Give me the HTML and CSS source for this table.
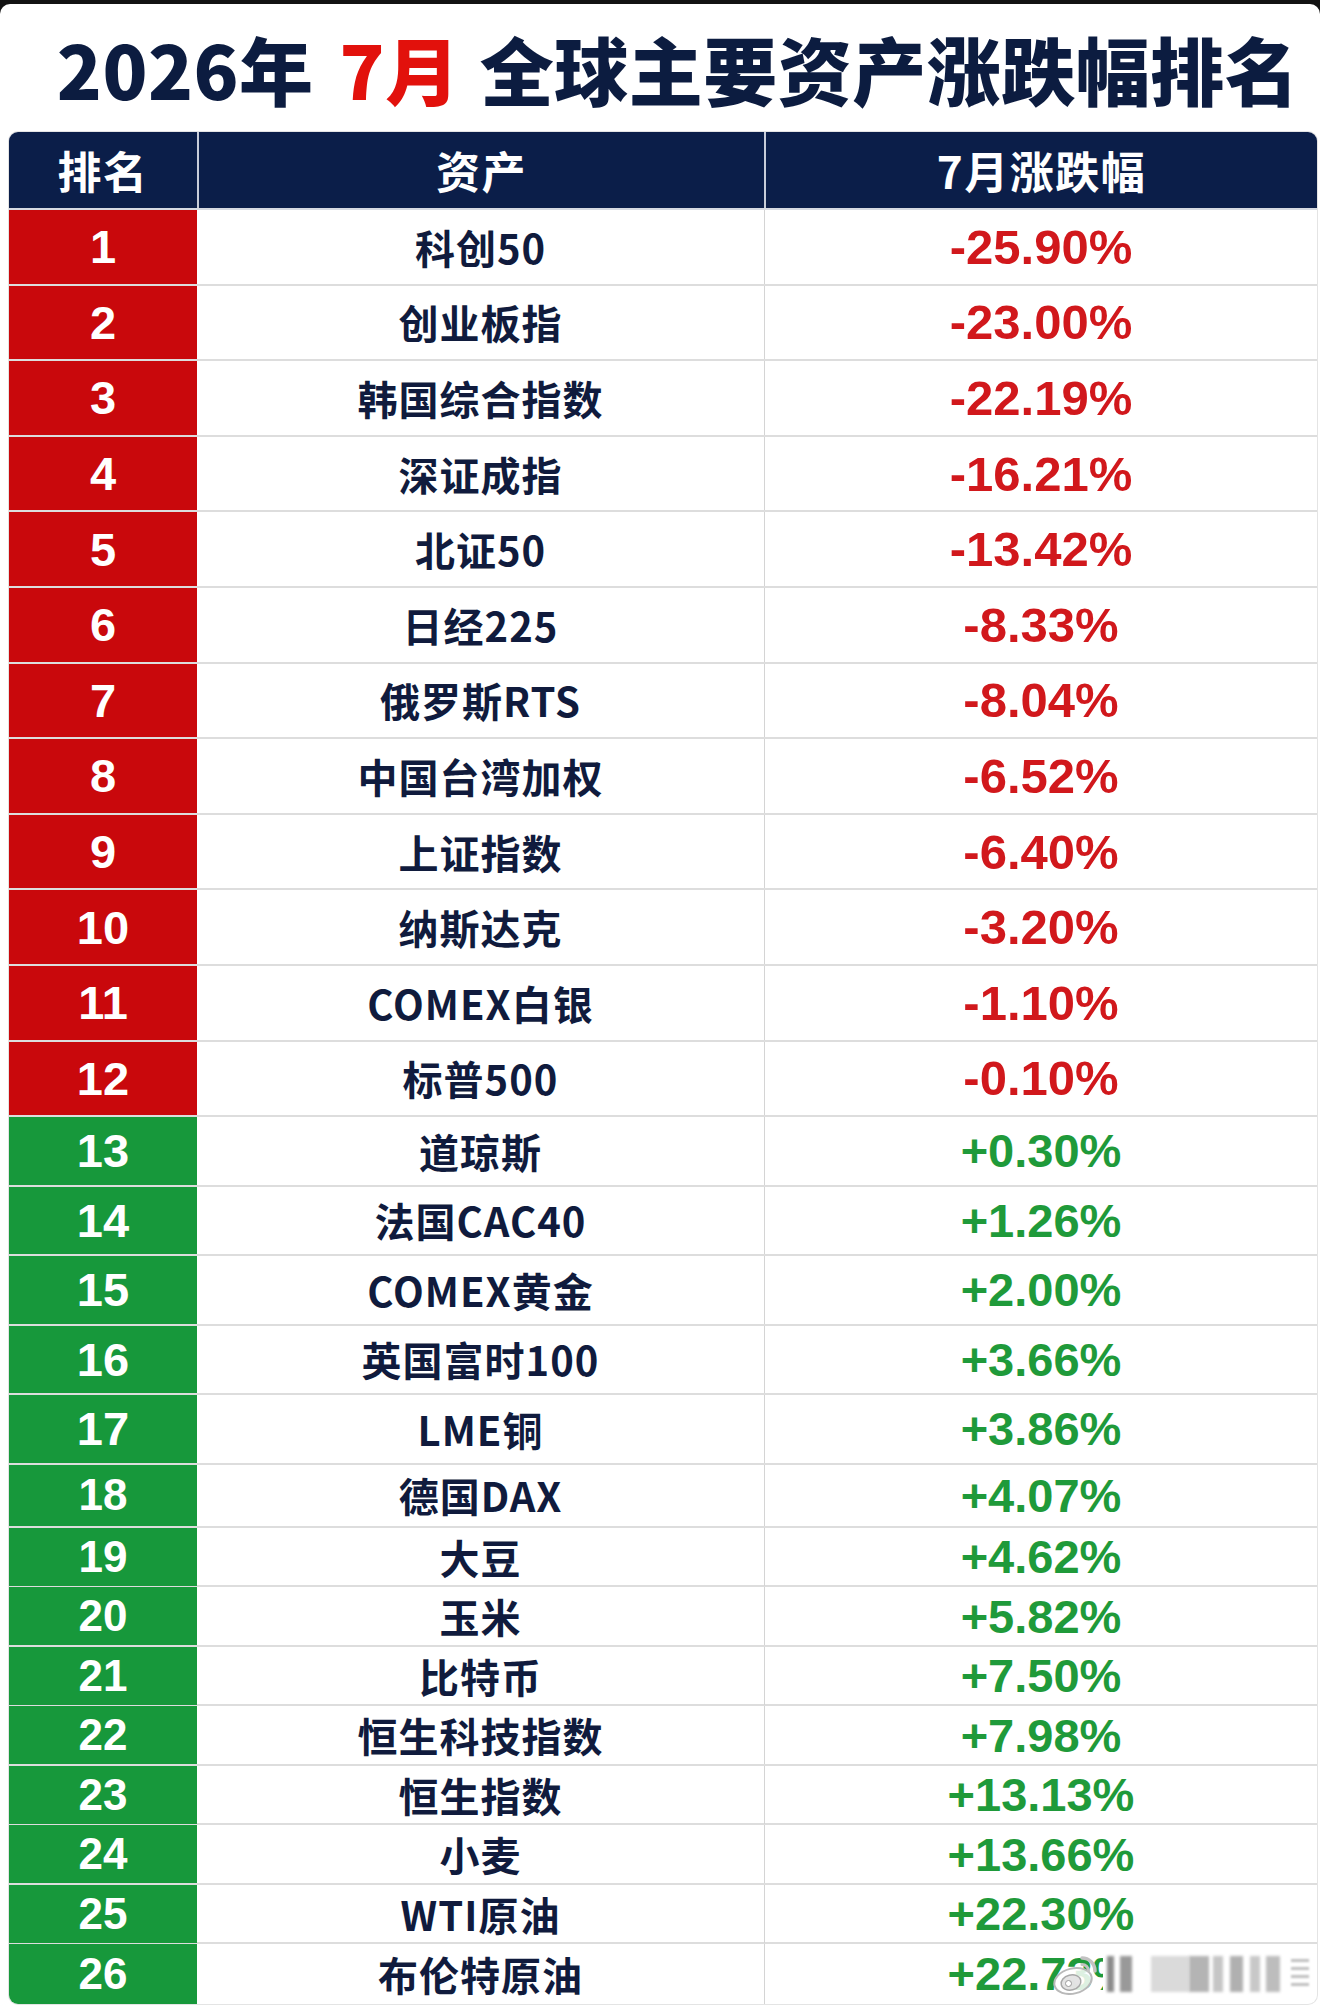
FILE: index.html
```html
<!DOCTYPE html>
<html lang="zh-CN">
<head>
<meta charset="utf-8">
<title>2026年7月全球主要资产涨跌幅排名</title>
<link rel="stylesheet" href="styles.css">
</head>
<body>
<div class="page">
  <h1 class="title"><span>2026年</span><span class="sp"></span><span class="hl">7月</span><span class="sp2"></span><span>全球主要资产涨跌幅排名</span></h1>
  <div class="table">
    <div class="row head"><div class="c rank">排名</div><div class="c asset">资产</div><div class="c chg">7月涨跌幅</div></div>

    <div class="row down tall"><div class="c rank">1</div><div class="c asset">科创50</div><div class="c chg">-25.90%</div></div>
    <div class="row down tall"><div class="c rank">2</div><div class="c asset">创业板指</div><div class="c chg">-23.00%</div></div>
    <div class="row down tall"><div class="c rank">3</div><div class="c asset">韩国综合指数</div><div class="c chg">-22.19%</div></div>
    <div class="row down tall"><div class="c rank">4</div><div class="c asset">深证成指</div><div class="c chg">-16.21%</div></div>
    <div class="row down tall"><div class="c rank">5</div><div class="c asset">北证50</div><div class="c chg">-13.42%</div></div>
    <div class="row down tall"><div class="c rank">6</div><div class="c asset">日经225</div><div class="c chg">-8.33%</div></div>
    <div class="row down tall"><div class="c rank">7</div><div class="c asset">俄罗斯RTS</div><div class="c chg">-8.04%</div></div>
    <div class="row down tall"><div class="c rank">8</div><div class="c asset">中国台湾加权</div><div class="c chg">-6.52%</div></div>
    <div class="row down tall"><div class="c rank">9</div><div class="c asset">上证指数</div><div class="c chg">-6.40%</div></div>
    <div class="row down tall"><div class="c rank">10</div><div class="c asset">纳斯达克</div><div class="c chg">-3.20%</div></div>
    <div class="row down tall"><div class="c rank">11</div><div class="c asset">COMEX白银</div><div class="c chg">-1.10%</div></div>
    <div class="row down tall"><div class="c rank">12</div><div class="c asset">标普500</div><div class="c chg">-0.10%</div></div>

    <div class="row up mid"><div class="c rank">13</div><div class="c asset">道琼斯</div><div class="c chg">+0.30%</div></div>
    <div class="row up mid"><div class="c rank">14</div><div class="c asset">法国CAC40</div><div class="c chg">+1.26%</div></div>
    <div class="row up mid"><div class="c rank">15</div><div class="c asset">COMEX黄金</div><div class="c chg">+2.00%</div></div>
    <div class="row up mid"><div class="c rank">16</div><div class="c asset">英国富时100</div><div class="c chg">+3.66%</div></div>
    <div class="row up mid"><div class="c rank">17</div><div class="c asset">LME铜</div><div class="c chg">+3.86%</div></div>
    <div class="row up semi"><div class="c rank">18</div><div class="c asset">德国DAX</div><div class="c chg">+4.07%</div></div>
    <div class="row up short"><div class="c rank">19</div><div class="c asset">大豆</div><div class="c chg">+4.62%</div></div>
    <div class="row up short"><div class="c rank">20</div><div class="c asset">玉米</div><div class="c chg">+5.82%</div></div>
    <div class="row up short"><div class="c rank">21</div><div class="c asset">比特币</div><div class="c chg">+7.50%</div></div>
    <div class="row up short"><div class="c rank">22</div><div class="c asset">恒生科技指数</div><div class="c chg">+7.98%</div></div>
    <div class="row up short"><div class="c rank">23</div><div class="c asset">恒生指数</div><div class="c chg">+13.13%</div></div>
    <div class="row up short"><div class="c rank">24</div><div class="c asset">小麦</div><div class="c chg">+13.66%</div></div>
    <div class="row up short"><div class="c rank">25</div><div class="c asset">WTI原油</div><div class="c chg">+22.30%</div></div>
    <div class="row up short last"><div class="c rank">26</div><div class="c asset">布伦特原油</div><div class="c chg">+22.73%
      <div class="wm">
        <svg class="wlogo" width="52" height="42" viewBox="0 0 52 42">
          <ellipse cx="22" cy="28" rx="19" ry="12.5" transform="rotate(-14 22 28)" fill="rgba(255,255,255,0.85)" stroke="#b9b9b9" stroke-width="2"/>
          <ellipse cx="20" cy="29.5" rx="10" ry="7.5" transform="rotate(-14 20 29.5)" fill="rgba(225,225,225,0.9)" stroke="#a8a8a8" stroke-width="1.5"/>
          <circle cx="17.5" cy="30.5" r="3" fill="#fff" stroke="#999" stroke-width="1"/>
          <path d="M31 5 A13 13 0 0 1 44 18" fill="none" stroke="#c2c2c2" stroke-width="3.5" stroke-linecap="round"/>
          <path d="M31 11.5 A6.5 6.5 0 0 1 37.5 18" fill="none" stroke="#c2c2c2" stroke-width="3" stroke-linecap="round"/>
        </svg>
        <div class="bars">
          <i class="b1"></i><i class="b2"></i><i class="b3"></i><i class="b4"></i><i class="b5"></i><i class="b6"></i><i class="b7"></i><i class="b8"></i><i class="b9"></i>
        </div>
      </div>
    </div></div>
  </div>
</div>
</body>
</html>
```

FILE: styles.css
```css
html, body {
  margin: 0;
  padding: 0;
}
body {
  background: #121212;
  width: 1320px;
  height: 2007px;
  overflow: hidden;
}
.page {
  margin-top: 4px;
  height: 2003px;
  background: #ffffff;
  border-radius: 10px 10px 0 0;
  overflow: hidden;
}
.title {
  margin: 0;
  height: 128px;
  box-sizing: border-box;
  padding-left: 36px;
  display: flex;
  align-items: center;
  justify-content: center;
  font-family: "Noto Sans CJK SC", "Noto Sans", sans-serif;
  font-weight: 900;
  font-size: 74px;
  line-height: 1;
  color: #0c1c40;
  letter-spacing: 0.5px;
  white-space: nowrap;
}
.title span {
  flex: none;
}
.title .hl {
  color: #e2110c;
}
.title .sp {
  width: 26px;
}
.title .sp2 {
  width: 20px;
}
.table {
  margin-left: 9px;
  width: 1308px;
  border-radius: 9px;
  overflow: hidden;
  box-shadow: 0 0 0 1px #e4e4e4;
}
.row {
  display: grid;
  grid-template-columns: 188px 567px 1fr;
  box-sizing: border-box;
  border-bottom: 2px solid #dddddd;
}
.row.last {
  border-bottom: none;
}
.c {
  display: flex;
  align-items: center;
  justify-content: center;
  white-space: nowrap;
}
.head {
  height: 78px;
  background: #0b1e49;
  border-bottom: 2px solid #d6dae2;
}
.head .c {
  color: #ffffff;
  font-family: "Noto Sans CJK SC", "Noto Sans", sans-serif;
  font-weight: 700;
  font-size: 44px;
  letter-spacing: 1.5px;
}
.head .asset,
.head .chg {
  border-left: 2px solid #c7cdd9;
}
.tall { height: 75.6px; }
.mid { height: 69.5px; }
.semi { height: 63px; }
.short { height: 59.5px; }

.rank {
  color: #ffffff;
  font-family: "Liberation Sans", Arial, sans-serif;
  font-weight: 700;
  font-size: 47px;
}
.down .rank { background: #c9080c; }
.up .rank { background: #17983b; }
.short .rank, .semi .rank { font-size: 44px; }

.asset {
  color: #101b3d;
  font-family: "Noto Sans CJK SC", "Noto Sans", sans-serif;
  font-weight: 700;
  font-size: 40px;
  letter-spacing: 1px;
}
.row .chg {
  font-family: "Liberation Sans", Arial, sans-serif;
  font-weight: 700;
  font-size: 49px;
}
.head .chg {
  font-family: "Noto Sans CJK SC", "Noto Sans", sans-serif;
  font-size: 44px;
}
.down .chg {
  color: #d1181c;
  border-left: 1px solid #d4d4d4;
}
.up .chg {
  color: #1f9a3a;
  font-size: 47px;
  border-left: 1px solid #d4d4d4;
}
.last .chg {
  position: relative;
}
.wm {
  position: absolute;
  left: 286px;
  top: 9px;
  width: 262px;
  height: 42px;
  display: flex;
  align-items: stretch;
}
.wlogo {
  flex: none;
}
.bars {
  flex: 1;
  position: relative;
  background: #ffffff;
}
.bars i {
  position: absolute;
  top: 3px;
  height: 36px;
  background: #8a8a8a;
  filter: blur(1.5px);
}
.bars .b1 { left: 4px; width: 7px; background: #6f6f6f; opacity: 0.8; }
.bars .b2 { left: 17px; width: 12px; background: #777; opacity: 0.75; }
.bars .b3 { left: 48px; width: 38px; background: #d6d6d6; opacity: 0.9; }
.bars .b4 { left: 86px; width: 20px; background: #b4b4b4; }
.bars .b5 { left: 110px; width: 10px; background: #c5c5c5; }
.bars .b6 { left: 127px; width: 13px; background: #b0b0b0; }
.bars .b7 { left: 147px; width: 10px; background: #c8c8c8; }
.bars .b8 { left: 163px; width: 14px; background: #bdbdbd; }
.bars .b9 { left: 188px; width: 18px; height: 30px; top: 6px; background: repeating-linear-gradient(#c0c0c0 0 3px, transparent 3px 8px); filter: blur(0.8px); }
```
